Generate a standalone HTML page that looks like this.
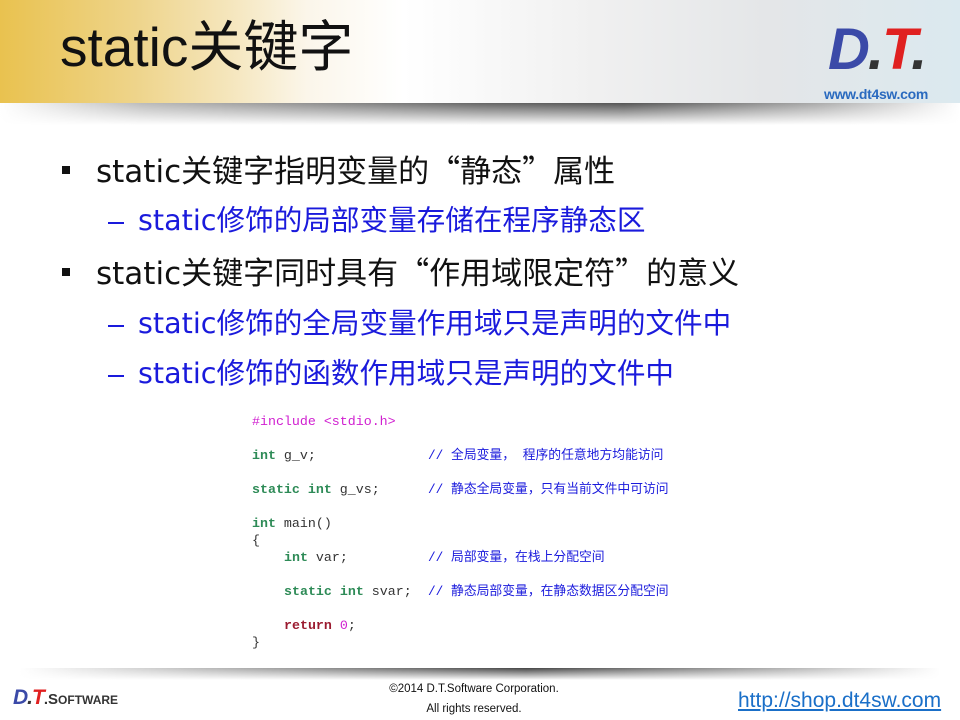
<!DOCTYPE html>
<html><head><meta charset="utf-8"><style>
*{margin:0;padding:0}
body{width:960px;height:720px;position:relative;background:#fff;overflow:hidden;font-family:"Liberation Sans","Noto Sans CJK SC",sans-serif}
.hdr{position:absolute;left:0;top:0;width:960px;height:103px;background:linear-gradient(90deg,#e9c24f 0%,#eed48a 14%,#f5e6bd 24%,#fbf6ea 32%,#fff 42%,#f0f0f0 62%,#e4e6e8 80%,#dbe9ef 100%)}
.sh{position:absolute;left:0;top:103px;width:960px;height:22px;background:linear-gradient(180deg,rgba(255,255,255,0) 0%,rgba(255,255,255,1) 100%),linear-gradient(90deg,#fff 0%,#bbb 15%,#666 50%,#555 65%,#aaa 85%,#fff 100%)}
.title{position:absolute;left:60px;top:17px;font-size:55px;color:#111;line-height:60px}
.b{position:absolute;font-family:"DejaVu Sans","Noto Sans CJK SC",sans-serif;font-size:28.6px;line-height:36px;color:#111;white-space:nowrap}
.bm{font-size:31px;line-height:38px}
.q{font-family:"Noto Sans CJK SC",sans-serif;display:inline-block;width:1em}
.q1{text-align:right}.q2{text-align:left}
.s{color:#1a1adc}
.sq{position:absolute;width:8px;height:8px;background:#111}
.dash{position:absolute;width:16px;height:2px;background:#1a1adc}
.cl{position:absolute;font-family:"Liberation Mono",monospace;font-size:13.3px;line-height:17px;color:#333;white-space:pre}
.k{color:#2e8b57;font-weight:bold}
.r{color:#9b1b30;font-weight:bold}
.m{color:#d020d0}
.c{position:absolute;left:428px;font-family:"Liberation Mono","Noto Sans CJK SC",monospace;font-size:12.8px;line-height:17px;color:#1a1adc;white-space:pre}
.fsh{position:absolute;left:20px;top:668px;width:920px;height:12px;background:linear-gradient(180deg,rgba(255,255,255,0),#fff),linear-gradient(90deg,#fff,#bbb 20%,#444 55%,#bbb 85%,#fff)}
</style></head><body>
<div class="hdr"></div><div class="sh"></div>
<div class="title">static关键字</div>
<div style="position:absolute;left:828px;top:20px;font-size:58px;font-weight:bold;font-style:italic;line-height:60px;letter-spacing:-2px"><span style="color:#3b4aa8">D</span><span style="color:#333">.</span><span style="color:#e02020">T</span><span style="color:#333">.</span></div>
<div style="position:absolute;left:824px;top:86px;font-size:14px;font-weight:bold;color:#2a6abf;letter-spacing:-0.3px">www.dt4sw.com</div>

<div class="sq" style="left:62px;top:166px"></div>
<div class="b bm" style="left:96px;top:150px">static关键字指明变量的<span class="q q1">“</span>静态<span class="q q2">”</span>属性</div>
<div class="dash" style="left:108px;top:222px"></div>
<div class="b s" style="left:138px;top:202px">static修饰的局部变量存储在程序静态区</div>
<div class="sq" style="left:62px;top:268px"></div>
<div class="b bm" style="left:96px;top:252px">static关键字同时具有<span class="q q1">“</span>作用域限定符<span class="q q2">”</span>的意义</div>
<div class="dash" style="left:108px;top:325px"></div>
<div class="b s" style="left:138px;top:305px">static修饰的全局变量作用域只是声明的文件中</div>
<div class="dash" style="left:108px;top:375px"></div>
<div class="b s" style="left:138px;top:355px">static修饰的函数作用域只是声明的文件中</div>

<div class="cl" style="left:252px;top:413px"><span class="m">#include &lt;stdio.h&gt;</span></div>
<div class="cl" style="left:252px;top:447px"><span class="k">int</span> g_v;</div>
<div class="c" style="top:447px">// 全局变量， 程序的任意地方均能访问</div>
<div class="cl" style="left:252px;top:481px"><span class="k">static int</span> g_vs;</div>
<div class="c" style="top:481px">// 静态全局变量，只有当前文件中可访问</div>
<div class="cl" style="left:252px;top:515px"><span class="k">int</span> main()</div>
<div class="cl" style="left:252px;top:532px">{</div>
<div class="cl" style="left:284px;top:549px"><span class="k">int</span> var;</div>
<div class="c" style="top:549px">// 局部变量，在栈上分配空间</div>
<div class="cl" style="left:284px;top:583px"><span class="k">static int</span> svar;</div>
<div class="c" style="top:583px">// 静态局部变量，在静态数据区分配空间</div>
<div class="cl" style="left:284px;top:617px"><span class="r">return</span> <span class="m">0</span>;</div>
<div class="cl" style="left:252px;top:634px">}</div>

<div class="fsh"></div>
<div style="position:absolute;left:13px;top:686px;font-size:21px;font-weight:bold;font-style:italic;line-height:24px;letter-spacing:-1px"><span style="color:#3b4aa8">D</span><span style="color:#333">.</span><span style="color:#e02020">T</span><span style="color:#333;font-style:normal;font-size:15px;letter-spacing:0">.S<span style="font-size:12px">OFTWARE</span></span></div>
<div style="position:absolute;left:374px;top:679px;width:200px;text-align:center;font-size:11.5px;line-height:20px;color:#111">©2014 D.T.Software Corporation.<br>All rights reserved.</div>
<div style="position:absolute;left:738px;top:689px;font-size:21px;color:#1a6fc8;text-decoration:underline">http://shop.dt4sw.com</div>
</body></html>
